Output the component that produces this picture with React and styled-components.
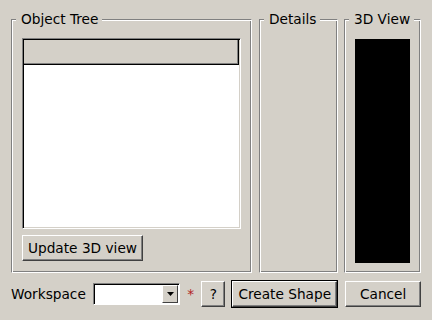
import styled, { createGlobalStyle } from "styled-components";

const GlobalStyle = createGlobalStyle`
  html, body {
    margin: 0;
    padding: 0;
    background: #d4d0c8;
  }
  body {
    font-family: "DejaVu Sans", sans-serif;
    font-size: 13.7px;
    color: #000;
  }
`;

const Window = styled.div`
  width: 432px;
  height: 320px;
  box-sizing: border-box;
  padding: 19px 11px 0 11px;
  background: #d4d0c8;
  display: flex;
  flex-direction: column;
`;

const Panels = styled.div`
  display: flex;
  height: 254px;
`;

const LabelFrame = styled.div`
  position: relative;
  box-sizing: border-box;
  width: ${p => p.$width}px;
  margin-left: ${p => p.$gap || 0}px;
  height: 100%;
  border: 1px solid;
  border-color: #808080 #fff #fff #808080;
  box-shadow: inset 1px 1px 0 #fff, inset -1px -1px 0 #808080;
  padding: ${p => p.$pad};
  display: flex;
  flex-direction: column;
  align-items: flex-start;
`;

const Legend = styled.span`
  position: absolute;
  top: -9px;
  left: 4px;
  padding: 0 4px 0 5px;
  line-height: 16px;
  background: #d4d0c8;
  white-space: nowrap;
`;

const Tree = styled.div`
  box-sizing: border-box;
  width: 100%;
  height: 191px;
  border: 1px solid;
  border-color: #808080 #fff #fff #808080;
  box-shadow: inset 1px 1px 0 #000, inset -1px -1px 0 #d4d0c8;
  padding: 1px;
  background: #fff;
  display: flex;
  flex-direction: column;
`;

const TreeHeader = styled.div`
  height: 25px;
  box-sizing: border-box;
  background: #d4d0c8;
  border-right: 1px solid #000;
  border-bottom: 1px solid #000;
  box-shadow: inset -1px -1px 0 #808080;
`;

const Button = styled.button`
  font: inherit;
  color: #000;
  box-sizing: border-box;
  height: 26px;
  width: ${p => (p.$width ? `${p.$width}px` : "auto")};
  padding: 0 4px;
  margin: 0;
  background: #d4d0c8;
  border: 1px solid;
  border-color: #fff #404040 #404040 #fff;
  box-shadow: inset -1px -1px 0 #808080;
  white-space: nowrap;
  cursor: pointer;
`;

const TreeButton = styled(Button)`
  margin-top: 6px;
  width: 121px;
`;

const DefaultRing = styled.div`
  border: 1px solid #000;
  display: flex;
  margin-left: ${p => p.$gap}px;
`;

const Canvas = styled.div`
  width: 55px;
  flex: 1;
  background: #000;
`;

const BottomRow = styled.div`
  display: flex;
  align-items: center;
  margin-top: 7px;
  height: 28px;
`;

const FieldLabel = styled.span`
  width: 82px;
`;

const Combo = styled.div`
  box-sizing: border-box;
  width: 88px;
  height: 22px;
  border: 1px solid;
  border-color: #808080 #fff #fff #808080;
  box-shadow: inset 1px 1px 0 #000;
  padding: 1px;
  background: #fff;
  display: flex;
  justify-content: flex-end;
`;

const ComboArrow = styled.div`
  box-sizing: border-box;
  width: 16px;
  height: 100%;
  background: #d4d0c8;
  border: 1px solid;
  border-color: #fff #404040 #404040 #fff;
  display: flex;
  align-items: center;
  justify-content: center;
`;

const Required = styled.span`
  color: #b22222;
  margin-left: 7px;
  width: 14px;
`;

const Spaced = styled(Button)`
  margin-left: ${p => p.$gap}px;
`;

export default function App() {
  return (
    <Window>
      <GlobalStyle />
      <Panels>
        <LabelFrame $width={241} $pad="18px 10px 11px 10px">
          <Legend>Object Tree</Legend>
          <Tree>
            <TreeHeader />
          </Tree>
          <TreeButton>Update 3D view</TreeButton>
        </LabelFrame>
        <LabelFrame $width={79} $gap={7} $pad="18px 10px 10px 10px">
          <Legend>Details</Legend>
        </LabelFrame>
        <LabelFrame $width={77} $gap={6} $pad="19px 10px 9px 10px">
          <Legend>3D View</Legend>
          <Canvas />
        </LabelFrame>
      </Panels>
      <BottomRow>
        <FieldLabel>Workspace</FieldLabel>
        <Combo>
          <ComboArrow>
            <svg width="7" height="4" viewBox="0 0 7 4">
              <polygon points="0,0 7,0 3.5,4" fill="#000" />
            </svg>
          </ComboArrow>
        </Combo>
        <Required>*</Required>
        <Spaced $gap={0} $width={24}>?</Spaced>
        <DefaultRing $gap={6}>
          <Button $width={105}>Create Shape</Button>
        </DefaultRing>
        <Spaced $gap={7} $width={76}>Cancel</Spaced>
      </BottomRow>
    </Window>
  );
}
